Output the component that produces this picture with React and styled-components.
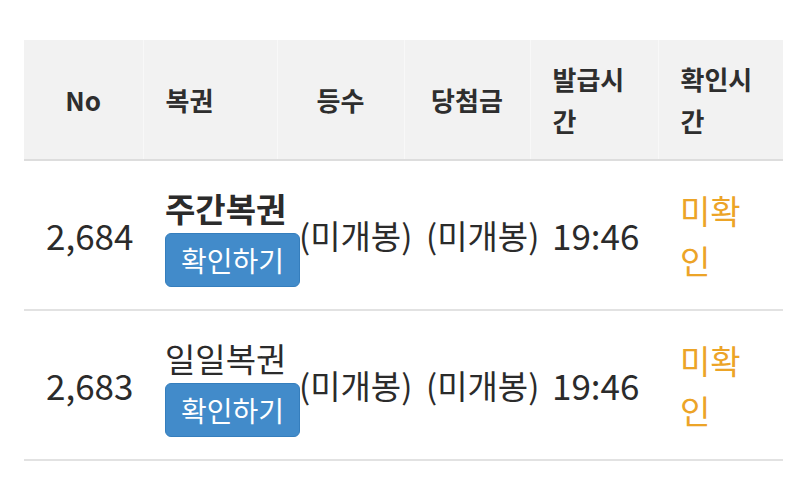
import React from 'react';
import styled, { createGlobalStyle } from 'styled-components';

const GlobalStyle = createGlobalStyle`
  body {
    margin: 0;
    background: #fff;
    font-family: "Noto Sans CJK KR", "Noto Sans", sans-serif;
    color: #333;
  }
`;

const Page = styled.div`
  padding: 40px 17px 0 24px;
`;

const Table = styled.table`
  width: 759px;
  border-collapse: collapse;
  table-layout: fixed;
`;

const HeadRow = styled.tr`
  background: #f2f2f2;
  border-bottom: 2px solid #dddddd;
`;

const Th = styled.th`
  padding: 18px 22px;
  font-size: 26px;
  line-height: 1.6;
  font-weight: 700;
  color: #2e2e2e;
  text-align: ${({ $align }) => $align || 'left'};
  vertical-align: middle;
  border-left: 1px solid #f8f8f8;

  &:first-child {
    border-left: none;
  }
`;

const Row = styled.tr`
  border-bottom: 2px solid #e2e2e2;
`;

const Td = styled.td`
  padding: 22px;
  font-size: ${({ $num }) => ($num ? '35px' : '33px')};
  line-height: 50px;
  vertical-align: middle;
  white-space: ${({ $wrap }) => ($wrap ? 'normal' : 'nowrap')};
  color: ${({ $status }) => ($status ? '#eca427' : '#2b2b2b')};
  overflow: visible;
`;

const Title = styled.div`
  font-weight: ${({ $bold }) => ($bold ? 700 : 400)};
`;

const CheckButton = styled.button`
  display: inline-block;
  font-family: inherit;
  font-size: 28px;
  line-height: 40px;
  padding: 6px 15px;
  color: #fff;
  background: #428bca;
  border: 1px solid #357ebd;
  border-radius: 6px;
  cursor: pointer;
`;

const columns = [
  { label: 'No', width: 119, align: 'center' },
  { label: '복권', width: 134 },
  { label: '등수', width: 127, align: 'center' },
  { label: '당첨금', width: 126, align: 'center' },
  { label: '발급시간', width: 128 },
  { label: '확인시간', width: 125 },
];

const tickets = [
  { no: '2,684', name: '주간복권', bold: true },
  { no: '2,683', name: '일일복권', bold: false },
];

export default function App() {
  return (
    <Page>
      <GlobalStyle />
      <Table>
        <colgroup>
          {columns.map((c) => (
            <col key={c.label} style={{ width: c.width }} />
          ))}
        </colgroup>
        <thead>
          <HeadRow>
            {columns.map((c) => (
              <Th key={c.label} $align={c.align}>
                {c.label}
              </Th>
            ))}
          </HeadRow>
        </thead>
        <tbody>
          {tickets.map((t) => (
            <Row key={t.no}>
              <Td $num>{t.no}</Td>
              <Td>
                <Title $bold={t.bold}>{t.name}</Title>
                <CheckButton>확인하기</CheckButton>
              </Td>
              <Td>(미개봉)</Td>
              <Td>(미개봉)</Td>
              <Td $num>19:46</Td>
              <Td $wrap $status>
                미확인
              </Td>
            </Row>
          ))}
        </tbody>
      </Table>
    </Page>
  );
}
